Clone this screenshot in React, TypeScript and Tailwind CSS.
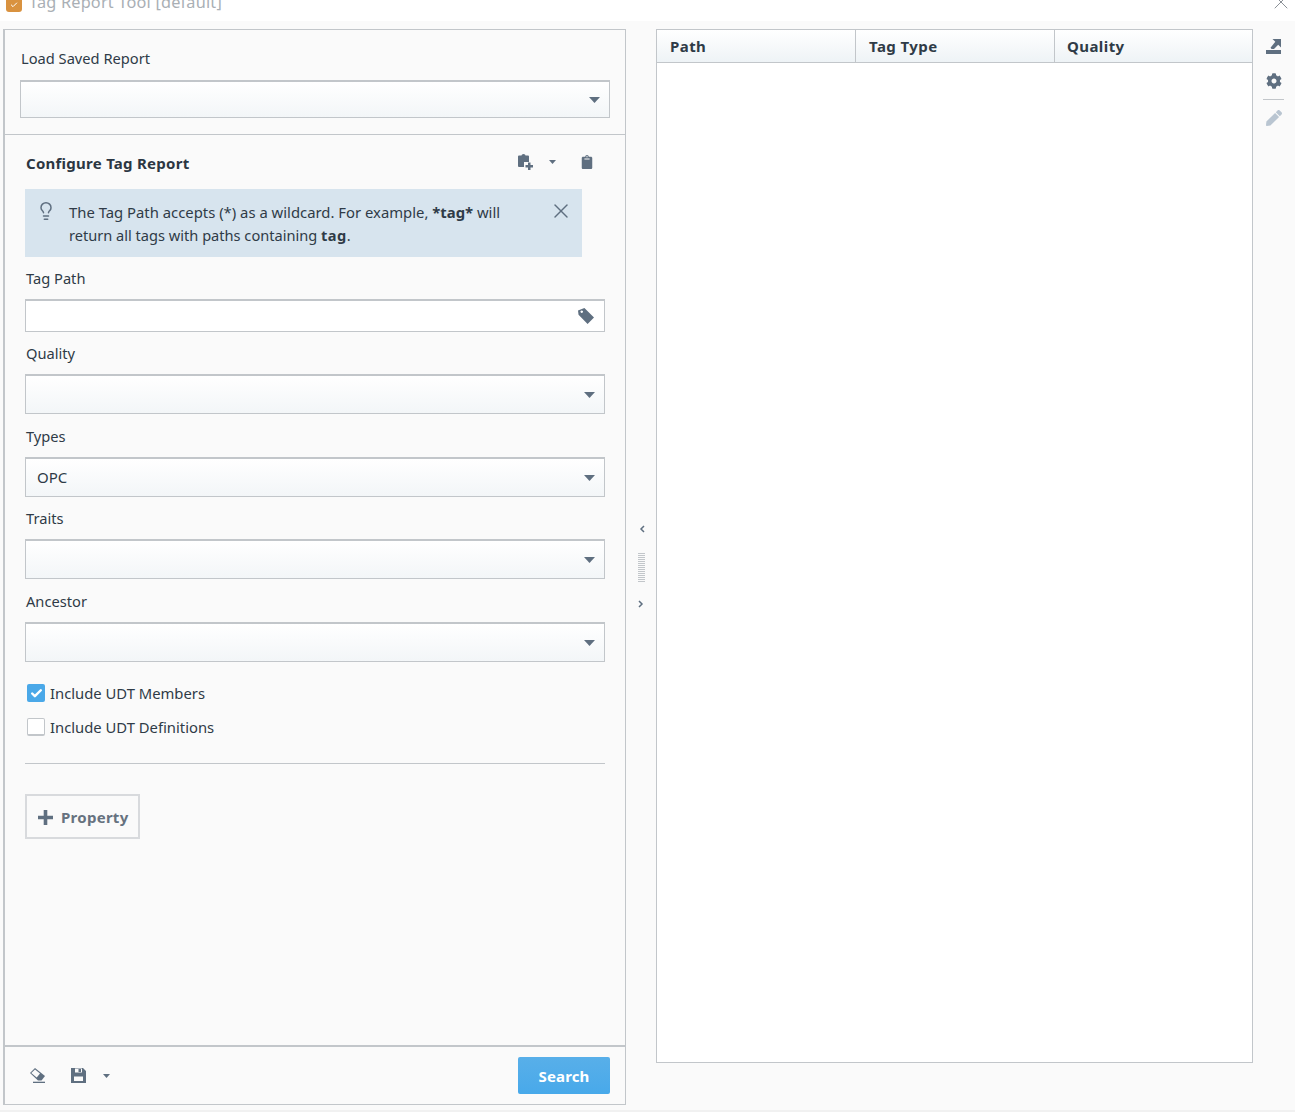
import { Check, Lightbulb, X } from "lucide-react";
import { FaClipboard, FaCog, FaPen } from "react-icons/fa";

function Caret() {
  return (
    <svg width="11" height="6" viewBox="0 0 11 6" className="text-[#5f6f80]">
      <path d="M0 0h11L5.5 6z" fill="currentColor" />
    </svg>
  );
}

function SmallCaret() {
  return (
    <svg width="7" height="4" viewBox="0 0 7 4" className="text-[#5f6f80]">
      <path d="M0 0h7L3.5 4z" fill="currentColor" />
    </svg>
  );
}

function ClipboardPlus() {
  return (
    <svg width="15" height="16" viewBox="0 0 15 16" className="text-[#5f6f80]">
      <path
        d="M0 2.5A1 1 0 0 1 1 1.5h2.5a2 1.5 0 0 1 4 0H10a1 1 0 0 1 1 1V8H6v5H1a1 1 0 0 1-1-1z"
        fill="currentColor"
      />
      <path d="M10 8.500h2.500V11H15v2.500h-2.500V16H10v-2.500H7.500V11H10z" fill="currentColor" />
    </svg>
  );
}

function Select({ value, tall = true }: { value?: string; tall?: boolean }) {
  return (
    <div
      className={`flex items-center justify-between border border-t-2 border-[#c2c6ca] bg-gradient-to-b from-white to-[#f3f6f8] pl-[11px] text-[15px] text-[#2f3b47] ${
        tall ? "h-[40px] pr-[9px]" : "h-[38px] pr-[9px]"
      }`}
    >
      <span>{value}</span>
      <Caret />
    </div>
  );
}

function Label({ text, className }: { text: string; className: string }) {
  return <div className={`h-[22px] pl-px leading-[20px] text-[#2f3b47] ${className}`}>{text}</div>;
}

function Field({ label, value }: { label: string; value?: string }) {
  return (
    <div>
      <Label text={label} className="mb-[9px]" />
      <Select value={value} />
    </div>
  );
}

export default function App() {
  return (
    <div className="flex h-[1112px] w-[1295px] flex-col overflow-hidden bg-white font-['Noto_Sans',sans-serif] text-[14.67px]">
      {/* Title bar */}
      <div className="flex h-[21px] shrink-0 items-start justify-between overflow-hidden pr-[2px] pl-[6px]">
        <div className="-mt-[9px] flex items-center gap-[7px]">
          <span className="flex h-[19px] w-[16px] items-end justify-center rounded-[3px] bg-[#d9923f] pb-[3px] text-white">
            <Check size={8} strokeWidth={3} />
          </span>
          <span className="text-[16.3px] leading-[22px] tracking-[0.2px] text-[#a9afb5]">Tag Report Tool [default]</span>
        </div>
        <X size={24} strokeWidth={1} className="-mt-[10px] text-[#8b9197]" />
      </div>

      <div className="flex h-[1089px] shrink-0 bg-[#fafafa] pt-[8px] pl-[3px]">
        {/* Left panel */}
        <div className="flex h-[1076px] w-[623px] shrink-0 flex-col border border-l-2 border-[#c2c6ca]">
          <div className="h-[105px] shrink-0 border-b border-[#c2c6ca] pt-[18px] pr-[15px] pl-[15px]">
            <Label text="Load Saved Report" className="mb-[10px]" />
            <Select tall={false} />
          </div>

          <div className="flex-1 pr-[20px] pl-[20px]">
            <div className="flex h-[54px] items-center justify-between pr-[11px] pl-px">
              <span className="mt-[2px] text-[15px] font-bold tracking-[0.26px] text-[#2b3642]">Configure Tag Report</span>
              <div className="flex items-center">
                <ClipboardPlus />
                <span className="mr-[24px] ml-[16px]">
                  <SmallCaret />
                </span>
                <FaClipboard size={14} className="text-[#5f6f80]" />
              </div>
            </div>

            <div className="mr-[23px] flex h-[68px] items-start bg-[#d7e4ee] pt-[12px] pr-[9px] pl-[11px]">
              <Lightbulb size={20} strokeWidth={1.8} className="mr-[13px] shrink-0 text-[#5f6f80]" />
              <p className="flex-1 leading-[23px] text-[#2f3b47]">
                <span className="block text-[14.85px]">
                  The Tag Path accepts (*) as a wildcard. For example, <b>*tag*</b> will
                </span>
                <span className="block text-[14.6px]">
                  return all tags with paths containing <b className="tracking-[0.5px]">tag</b>.
                </span>
              </p>
              <X size={24} strokeWidth={1.4} className="-mt-[2px] shrink-0 text-[#5f6f80]" />
            </div>

            <Label text="Tag Path" className="mt-[11px] mb-[9px]" />
            <div className="flex h-[33px] items-center justify-end border border-t-2 border-[#c2c6ca] bg-white pr-[10px]">
              <svg width="16" height="16" viewBox="0 0 15 15" className="text-[#5f6f80]">
                <path
                  fillRule="evenodd"
                  d="M0 2.300L6 0l9 9-6 6-8.500-8.700zM3.500 2.300a1.200 1.200 0 1 0 .01 0z"
                  fill="currentColor"
                />
              </svg>
            </div>

            <div className="mt-[11px]">
              <Field label="Quality" />
            </div>
            <div className="mt-[12px]">
              <Field label="Types" value="OPC" />
            </div>
            <div className="mt-[11px]">
              <Field label="Traits" />
            </div>
            <div className="mt-[12px]">
              <Field label="Ancestor" />
            </div>

            <label className="mt-[20px] flex h-[22px] items-center gap-[5px] pl-[2px] text-[14.8px] text-[#2f3b47]">
              <span className="flex h-[18px] w-[18px] items-center justify-center rounded-[2px] bg-[#4aa8e8] text-white">
                <Check size={13} strokeWidth={4.5} />
              </span>
              Include UDT Members
            </label>
            <label className="mt-[12px] flex h-[22px] items-center gap-[5px] pl-[2px] text-[14.8px] text-[#2f3b47]">
              <span className="h-[18px] w-[18px] rounded-[2px] border border-b-2 border-[#c2c6ca] bg-white" />
              Include UDT Definitions
            </label>

            <div className="mt-[25px] border-t border-[#c2c6ca]" />

            <button className="mt-[30px] flex h-[45px] w-[115px] items-center gap-[8px] border-2 border-[#d8dadd] pt-px pl-[11px] text-[15px] font-bold tracking-[0.27px] text-[#66727f]">
              <svg width="15" height="15" viewBox="0 0 15 15" className="text-[#5f6f80]">
                <path d="M5.700 0h3.600v5.700H15v3.600H9.300V15H5.700V9.300H0V5.700h5.700z" fill="currentColor" />
              </svg>
              Property
            </button>
          </div>

          {/* Bottom actions */}
          <div className="flex h-[59px] shrink-0 items-center justify-between border-t-2 border-[#c2c6ca] pr-[15px] pl-[25px]">
            <div className="flex items-center text-[#5f6f80]">
              <svg width="15" height="15" viewBox="0 0 15 15">
                <path d="M0 5l5-5 10 8-3.500 4.500H8z" fill="currentColor" />
                <path d="M1.300 5L5 1.400 10 5.500 6.700 9.500z" fill="#fafafa" />
                <rect x="3" y="13.700" width="12" height="1.300" fill="currentColor" />
              </svg>
              <svg width="15" height="15" viewBox="0 0 15 15" className="ml-[26px]">
                <path
                  fillRule="evenodd"
                  d="M0 0h12l3 3v12H0zM3 8.500V13h9V8.500zM4 0.500V4.500h7V0.500zM7.500 1v3H10V1z"
                  fill="currentColor"
                />
              </svg>
              <span className="ml-[17px]">
                <SmallCaret />
              </span>
            </div>
            <button className="h-[37px] w-[92px] rounded-[2px] bg-gradient-to-b from-[#58afe9] to-[#48a9ea] pt-px text-[15px] font-bold tracking-[0.15px] text-white">
              Search
            </button>
          </div>
        </div>

        {/* Splitter */}
        <div className="flex h-[1076px] w-[30px] shrink-0 flex-col items-center justify-center pb-[2px] text-[#5f6f80]">
          <svg width="6" height="8" viewBox="0 0 6 8" className="ml-[2px]">
            <path d="M5 1L2 4l3 3" fill="none" stroke="currentColor" strokeWidth="1.500" />
          </svg>
          <div className="mt-[20px] mb-[18px] flex w-[7px] flex-col gap-[1px]">
            {Array.from({ length: 15 }).map((_, i) => (
              <span key={i} className="h-px bg-[#c2c6ca]" />
            ))}
          </div>
          <svg width="6" height="8" viewBox="0 0 6 8" className="-ml-[1px]">
            <path d="M1 1l3 3-3 3" fill="none" stroke="currentColor" strokeWidth="1.500" />
          </svg>
        </div>

        {/* Results table */}
        <div className="flex h-[1034px] w-[597px] shrink-0 flex-col border border-[#c2c6ca] bg-white">
          <div className="grid h-[33px] shrink-0 grid-cols-[199px_199px_1fr] border-b border-[#c2c6ca] bg-gradient-to-b from-white to-[#eef3f6] text-[15px] font-bold tracking-[0.42px] text-[#2f3b47]">
            <div className="border-r border-[#c2c6ca] pl-[13px] leading-[33px]">Path</div>
            <div className="border-r border-[#c2c6ca] pl-[13px] leading-[33px]">Tag Type</div>
            <div className="pl-[12px] leading-[33px]">Quality</div>
          </div>
        </div>

        {/* Side toolbar */}
        <div className="flex w-[42px] shrink-0 flex-col items-center pt-[10px] pr-px text-[#5f6f80]">
          <svg width="15" height="15" viewBox="0 0 15 15">
            <rect y="11" width="15" height="4" fill="currentColor" />
            <path d="M6.500 0H15v8.500L12.200 5.700 8 10H5.600L4.500 8.800l4.800-6z" fill="currentColor" />
          </svg>
          <FaCog size={16} className="mt-[19px]" />
          <div className="mt-[10px] mb-[10px] w-[21px] border-t border-[#c2c6ca]" />
          <FaPen size={16} className="text-[#b9c5d1]" />
        </div>
      </div>

      <div className="flex-1 bg-[#f1f1f1]" />
    </div>
  );
}
